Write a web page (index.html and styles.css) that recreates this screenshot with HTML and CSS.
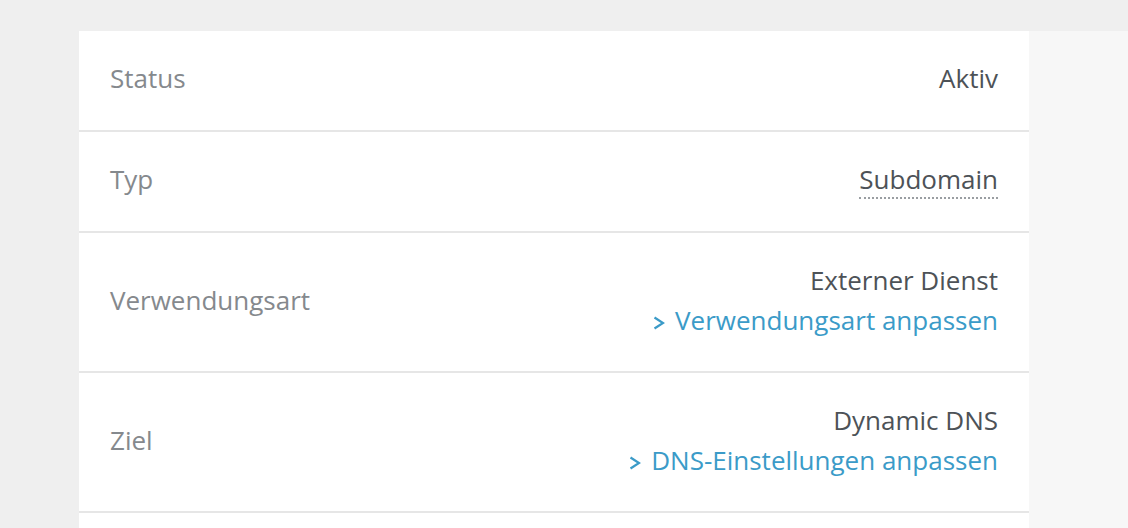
FILE: index.html
```html
<!DOCTYPE html>
<html lang="de">
<head>
    <meta charset="UTF-8">
    <meta name="viewport" content="width=device-width, initial-scale=1.0">
    <title>Domain-Details</title>
    <link rel="stylesheet" href="styles.css">
</head>
<body>
    <div class="page">
        <div class="details">
            <div class="row">
                <div class="label">Status</div>
                <div class="value">Aktiv</div>
            </div>
            <div class="row">
                <div class="label">Typ</div>
                <div class="value"><span class="hint">Subdomain</span></div>
            </div>
            <div class="row">
                <div class="label">Verwendungsart</div>
                <div class="value">
                    <div>Externer Dienst</div>
                    <a class="link" href="#"><svg class="chevron" viewBox="0 0 12 14" width="12" height="14"><path d="M1.5 1.5 L10 7 L1.5 12.5" fill="none" stroke="currentColor" stroke-width="2.2"/></svg>Verwendungsart anpassen</a>
                </div>
            </div>
            <div class="row">
                <div class="label">Ziel</div>
                <div class="value">
                    <div>Dynamic DNS</div>
                    <a class="link" href="#"><svg class="chevron" viewBox="0 0 12 14" width="12" height="14"><path d="M1.5 1.5 L10 7 L1.5 12.5" fill="none" stroke="currentColor" stroke-width="2.2"/></svg>DNS-Einstellungen anpassen</a>
                </div>
            </div>
            <div class="row"></div>
        </div>
        <div class="aside"></div>
    </div>
</body>
</html>
```

FILE: styles.css
```css
html, body {
    margin: 0;
    padding: 0;
}
body {
    font-family: "Open Sans", Arial, sans-serif;
    font-size: 26px;
    color: #4d5257;
    background-color: #efefef;
}
.page {
    display: flex;
    padding-top: 31px;
    padding-left: 79px;
}
.details {
    width: 950px;
    background-color: #fff;
}
.aside {
    flex: 1;
    background-color: #f7f7f7;
}
.row {
    display: flex;
    justify-content: space-between;
    align-items: center;
    padding: 0 31px;
    min-height: 99px;
    border-bottom: 2px solid #e6e6e6;
    line-height: 40px;
}
.row:nth-child(3), .row:nth-child(4) {
    min-height: 138px;
}
.label, .value {
    margin-bottom: 5px;
}
.label {
    color: #85898d;
}
.value {
    text-align: right;
}
.hint {
    border-bottom: 2px dotted #9a9ea2;
}
.link {
    color: #3b9bc8;
    text-decoration: none;
}
.chevron {
    margin-right: 10px;
    vertical-align: 0;
}
```
